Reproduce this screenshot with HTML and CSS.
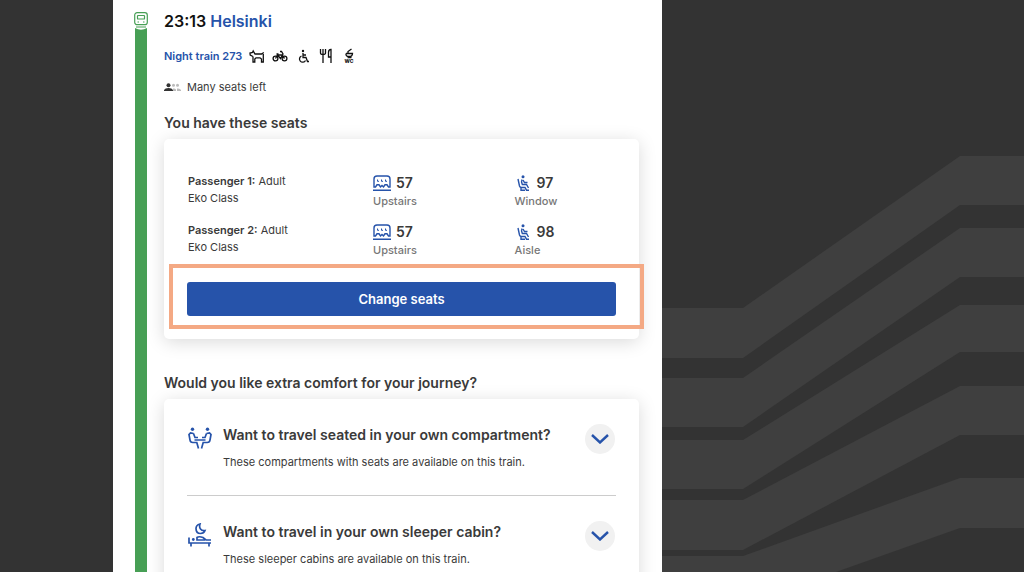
FILE: index.html
```html
<!DOCTYPE html>
<html lang="en">
<head>
<meta charset="utf-8">
<title>Night train 273 - Helsinki</title>
<link rel="stylesheet" href="styles.css">
</head>

<body>
<svg class="defs" width="0" height="0" aria-hidden="true">
	<symbol id="car" viewBox="0 0 18 16">
		<path d="M2.500 12H1V4q0-3 3-3h10q3 0 3 3v8h-1.500L14 9.800h-2L10.500 12 9 10.500 7.500 12 6 9.800H4zM0 15.200h18"/>
		<path stroke-width="1" d="M4.500 4.500v1.800h1.500M8.500 4.500v1.800h1.500M12.500 4.500v1.800h1.500"/>
	</symbol>
	<symbol id="seat" viewBox="0 0 13 16">
		<circle class="solid" cx="6" cy="1.700" r="1.500"/>
		<path d="M1 4l1.500 7q.4 1.500 2 1.500H8l1.500 2.700H12M5 4.500q-1 2 .3 5H9.500l2 3.500M6 5l1.500 2.500h3M4 12.500v2.700h4"/>
	</symbol>
	<symbol id="chevron" viewBox="0 0 18 10">
		<path d="M1 1l8 7.500L17 1"/>
	</symbol>
</svg>

<main class="panel">
	<div class="track">
		<svg class="train" viewBox="0 0 14 16" aria-hidden="true">
			<rect x=".7" y=".7" width="12.600" height="12" rx="2.500"/>
			<rect x="3.500" y="3.500" width="7" height="3.500" rx=".6"/>
			<path d="M3.500 10h1.500M9 10h1.500M2 15h10"/>
		</svg>
		<svg class="cap" viewBox="0 0 12 3" aria-hidden="true"><path d="M0 0q6 3.500 12 0v3H0z"/></svg>
		<div class="line"></div>
	</div>

	<div class="content">
		<h1>23:13 <a href="#helsinki">Helsinki</a></h1>

		<div class="route">
			<a href="#train">Night train 273</a>
			<svg viewBox="0 0 16 16" role="img" aria-label="Pets"><path d="M4 8.500L1.200 7 1 5l2.500-.5L4.200 3l1.800 3h6.500L14.800 4.500M14.300 6v8h-1.800v-3L11 9.800H7L5.800 11v3H4V8.500"/></svg>
			<svg viewBox="0 0 16 16" role="img" aria-label="Bicycles"><circle cx="3.500" cy="10.500" r="2.400"/><circle cx="12.500" cy="10.500" r="2.400"/><path d="M3.500 10.500l2-3.500H10l2.500 3.500M5.500 7l3 3.500L11 6 9.500 3.500H8M4.500 6h2"/></svg>
			<svg viewBox="0 0 16 16" role="img" aria-label="Wheelchair"><circle class="solid" cx="8" cy="3" r="1.200"/><path d="M8 5v4.500h3l1.500 4h1.500M8 7h3M6.500 8a3.200 3.200 0 1 0 4 4.500"/></svg>
			<svg viewBox="0 0 16 16" role="img" aria-label="Restaurant"><path d="M2.500 1v4q0 1.500 2.500 1.500T7.500 5V1M5 1v14M13 15V1.500q-2.500 0-2.500 3V9H13"/></svg>
			<svg viewBox="0 0 16 16" role="img" aria-label="Toilet"><path d="M10.500 1L7 3.500V5M5 5.500h6.500q0 3-3.500 3T5 5.500M6.500 9.500h4"/><text x="8" y="15" text-anchor="middle">WC</text></svg>
		</div>

		<div class="capacity">
			<svg viewBox="0 0 17 9" aria-hidden="true">
				<g class="free"><circle cx="9.500" cy="2.200" r="1.500"/><circle cx="13.500" cy="2.200" r="1.500"/><path d="M9 8V5.500q2-.5 3 1V8zM13 8V5.500q3-.5 4 1.500v1z"/></g>
				<circle cx="4.500" cy="2.200" r="2"/><path d="M0 8V7q1-2 4.500-2T9 7v1z"/>
			</svg>
			Many seats left
		</div>

		<h2>You have these seats</h2>
		<section class="card seats">
			<table>
				<tr>
					<td><b>Passenger 1:</b> Adult<br>Eko Class</td>
					<td><span class="num"><svg class="car"><use href="#car"/></svg>57</span><span class="place">Upstairs</span></td>
					<td><span class="num"><svg class="seat"><use href="#seat"/></svg>97</span><span class="place">Window</span></td>
				</tr>
				<tr>
					<td><b>Passenger 2:</b> Adult<br>Eko Class</td>
					<td><span class="num"><svg class="car"><use href="#car"/></svg>57</span><span class="place">Upstairs</span></td>
					<td><span class="num"><svg class="seat"><use href="#seat"/></svg>98</span><span class="place">Aisle</span></td>
				</tr>
			</table>
			<div class="action">
				<button class="change" type="button">Change seats</button>
				<div class="highlight"></div>
			</div>
		</section>

		<h2 class="extra">Would you like extra comfort for your journey?</h2>
		<section class="card">
			<div class="option">
				<svg class="pic" viewBox="0 0 24 24" aria-hidden="true">
					<circle class="solid" cx="4.500" cy="3.300" r="1.700"/><circle class="solid" cx="19.500" cy="3.300" r="1.700"/>
					<path d="M5.500 7.500L2.500 7 1 8.500l1 5.500q.3 2.500 2.800 2.500h4l1.700 6M5.500 7.500l1.500 4h3M18.500 7.500l3-.5L23 8.500 22 14q-.3 2.500-2.800 2.500h-4l-1.700 6M18.500 7.500l-1.500 4h-3M6.500 14h11"/>
				</svg>
				<div class="text">
					<h3>Want to travel seated in your own compartment?</h3>
					<p>These compartments with seats are available on this train.</p>
				</div>
				<button class="toggle" type="button" aria-label="Show compartments"><svg><use href="#chevron"/></svg></button>
			</div>
			<div class="option">
				<svg class="pic" viewBox="0 0 24 24" aria-hidden="true">
					<path d="M12 1q-4 1-4 4.500Q8 10.500 12.500 10.500q3.500 0 4.500-3-3 .5-4.500-1.500T12 1z"/>
					<path d="M1 14.500V20h22M23 17h-5l-3-2.500q-4-1.500-6 0V17h8M3 23.500V20M21 23.500V20"/>
					<circle class="solid" cx="5.300" cy="16.500" r="1.400"/>
				</svg>
				<div class="text">
					<h3>Want to travel in your own sleeper cabin?</h3>
					<p>These sleeper cabins are available on this train.</p>
				</div>
				<button class="toggle" type="button" aria-label="Show sleeper cabins"><svg><use href="#chevron"/></svg></button>
			</div>
		</section>
	</div>
</main>

<svg class="rails" viewBox="0 0 362 432" preserveAspectRatio="none" aria-hidden="true">
	<path d="M0 168H81L298 16H362V65H298L81 218H0z"/>
	<path d="M0 238H81L298 88H362V137H298L81 287H0z"/>
	<path d="M0 300H81L298 165H362V212H298L81 349H0z"/>
	<path d="M0 360H81L298 246H362V295H298L81 410H0z"/>
	<path d="M0 416H81L298 338H362V388H298L81 465H0z"/>
</svg>
</body>
</html>
```
FILE: styles.css
```css
*{margin:0; padding:0; box-sizing:border-box;}
body{display:grid; grid-template-columns:113fr 549fr 362fr; height:100vh; overflow:hidden; background:#333; color:#3a3a3a; font:11px/17px Inter, "Liberation Sans", sans-serif;}
a{color:#2653aa; text-decoration:none;}
svg{fill:none; stroke:currentColor; flex:none;}
.defs{position:absolute;}
.solid{fill:currentColor; stroke:none;}

.panel{grid-column:2; display:flex; gap:16px; padding:0 23px 0 21px; background:#fff; overflow:hidden;}
.track{width:14px; padding-top:12px; display:flex; flex-direction:column; align-items:center; color:#479f55;}
.train{width:14px; height:16px; stroke-width:1.2;}
.cap{width:12px; height:3px; fill:#479f55; stroke:none;}
.line{flex:1; width:12px; background:#479f55;}
.content{flex:1; min-width:0; padding-top:10px;}

h1{font-size:16px; line-height:22px; font-weight:600; color:#111;}
.route{display:flex; align-items:center; gap:7px; height:20px; margin-top:14px; font-weight:600; color:#111;}
.route svg{width:16px; height:16px; stroke-width:1.3;}
.route text{fill:#111; stroke:none; font-size:5px; font-weight:800;}
.capacity{display:flex; align-items:center; gap:6px; margin-top:12px; line-height:18px;}
.capacity svg{width:17px; height:9px; fill:#333; stroke:none;}
.capacity .free{fill:#bbb;}
h2{margin-top:16px; font-size:14px; line-height:22px; font-weight:600;}
.extra{margin-top:33px;}

.card{margin-top:5px; padding:0 23px; background:#fff; border-radius:5px; box-shadow:0 3px 18px rgba(0,0,0,.15);}
.seats{padding-top:34px; padding-bottom:23px;}
table{width:100%; table-layout:fixed; border-collapse:collapse;}
td{height:49px; vertical-align:top;}
td:first-child{width:186px; padding-left:1px;}
td:nth-child(2){width:33%;}
b{font-weight:600;}
.num{display:flex; align-items:center; gap:5px; line-height:20px; font-size:14px; font-weight:600;}
.num svg{color:#2653aa; stroke-width:1.4;}
.car{width:18px; height:16px;}
.seat{width:13px; height:16px; margin-left:2px; margin-right:2px;}
.place{display:block; line-height:17px; color:#777; font-weight:500;}

.action{position:relative; margin-top:11px;}
.change{display:block; width:100%; height:34px; border:0; border-radius:3px; background:#2653aa; color:#fff; font:600 13px Inter, "Liberation Sans", sans-serif;}
.highlight{position:absolute; top:-18px; right:-28px; bottom:-13px; left:-18px; border:4px solid #f4a984; pointer-events:none;}

.option{display:flex; align-items:flex-start; padding:25px 0 24px;}
.option + .option{border-top:1px solid #ccc;}
.pic{width:24px; height:24px; margin-left:1px; margin-top:2px; color:#2653aa; stroke-width:1.7;}
.text{flex:1; margin-left:11px;}
h3{font-size:14px; line-height:22px; font-weight:600;}
p{margin-top:7px; line-height:18px;}
.toggle{display:flex; align-items:center; justify-content:center; width:30px; height:30px; margin-right:1px; border:0; border-radius:50%; background:#f1f1f1; color:#2653aa;}
.toggle svg{width:18px; height:10px; stroke-width:2.4;}

.rails{grid-column:3; align-self:end; width:100%; height:432px; fill:#3f3f3f; stroke:none;}
```
